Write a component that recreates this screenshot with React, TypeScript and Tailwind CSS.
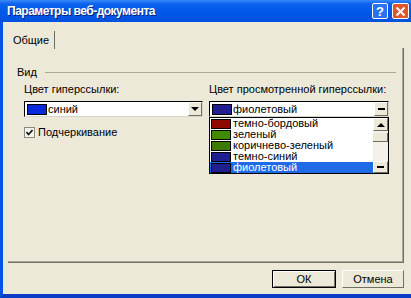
const listItems = [
  { name: 'темно-бордовый', color: '#8E0A00' },
  { name: 'зеленый', color: '#3F8A00' },
  { name: 'коричнево-зеленый', color: '#3C7A00' },
  { name: 'темно-синий', color: '#1F1F8F' },
  { name: 'фиолетовый', color: '#1F1F8F', selected: true },
];

function Arrow({ flat }: { flat?: boolean }) {
  return flat ? (
    <div className="w-[7px] h-[2px] bg-black" />
  ) : (
    <div className="w-0 h-0 border-l-[4px] border-r-[4px] border-t-[4px] border-l-transparent border-r-transparent border-t-black" />
  );
}

function Combo({ color, label, flat }: { color: string; label: string; flat?: boolean }) {
  return (
    <div className="h-[16px] flex items-center border-t border-l border-black border-r border-b border-r-[#D8D4C8] border-b-[#D8D4C8] bg-white">
      <div className="ml-[2px] w-[20px] h-[11px] border border-black" style={{ backgroundColor: color }} />
      <span className="ml-[1px] flex-1 leading-[14px]">{label}</span>
      <div className="w-[14px] h-[14px] bg-[#ECE9D8] border-t border-l border-white border-r border-b border-r-[#716F64] border-b-[#716F64] flex items-center justify-center">
        <Arrow flat={flat} />
      </div>
    </div>
  );
}

export default function App() {
  return (
    <div className="w-[411px] h-[298px] flex flex-col overflow-hidden text-[11px] text-black font-['Liberation_Sans',Arial,sans-serif] bg-[#0054E3]">
      {/* title bar */}
      <div className="h-[22px] flex items-center bg-[linear-gradient(to_bottom,#3A8BF6_0%,#0A62EE_18%,#0058E8_55%,#0052DE_100%)]">
        <span className="ml-[7px] flex-1 text-white font-bold text-[12px] tracking-[-0.5px] [text-shadow:1px_1px_0_#0A1F80]">
          Параметры веб-документа
        </span>
        <div className="w-[16px] h-[16px] rounded-[2px] border border-white bg-[#2A72F0] flex items-center justify-center text-white font-bold text-[13px] leading-none">
          ?
        </div>
        <div className="ml-[4px] mr-[2px] w-[17px] h-[16px] rounded-[2px] border border-white bg-[#E0562B] flex items-center justify-center">
          <svg width="11" height="11" viewBox="0 0 11 11">
            <path d="M1.5 1.5 L9.5 9.5 M9.5 1.5 L1.5 9.5" stroke="white" strokeWidth="2" />
          </svg>
        </div>
      </div>

      {/* body */}
      <div className="flex-1 flex flex-col bg-[#ECE9D8] border-l-[3px] border-l-[#0654E4] border-b-[4px] border-b-[#0A3CC8] pt-[9px]">
        <div className="ml-[5px] w-[47px] h-[18px] -mb-[1px] z-10 border-r border-r-[#716F64] flex items-center justify-center">
          Общие
        </div>
        <div className="relative ml-[5px] w-[396px] h-[215px] border-r border-b border-[#716F64] shadow-[inset_-1px_-1px_0_#ACA899]">
          <div className="flex items-center pl-[9px] pr-[7px] pt-[18px]">
            <span className="leading-[13px]">Вид</span>
            <div className="ml-[8px] flex-1 h-px bg-[#ACA899]" />
          </div>
          <div className="flex gap-[6px] pl-[16px] mt-[4px]">
            <div className="w-[179px] flex flex-col">
              <span className="leading-[13px]">Цвет гиперссылки:</span>
              <div className="mt-[5px]">
                <Combo color="#0A2BDB" label="синий" />
              </div>
              <div className="mt-[9px] flex items-center">
                <div className="w-[11px] h-[11px] bg-[#F4F3EE] border border-[#8C8A80] flex items-center justify-center">
                  <svg width="7" height="7" viewBox="0 0 7 7">
                    <path d="M0.5 3 L2.5 5.5 L6.5 1" stroke="#111" strokeWidth="1.6" fill="none" />
                  </svg>
                </div>
                <span className="ml-[3px] leading-[13px]">Подчеркивание</span>
              </div>
            </div>
            <div className="w-[180px] flex flex-col relative">
              <span className="leading-[13px]">Цвет просмотренной гиперссылки:</span>
              <div className="mt-[5px]">
                <Combo color="#1F1F8F" label="фиолетовый" flat />
              </div>
              {/* dropdown list */}
              <div className="absolute left-0 top-[34px] w-[180px] h-[57px] border border-black bg-white flex z-20">
                <div className="flex-1 flex flex-col">
                  {listItems.map((it) => (
                    <div
                      key={it.name}
                      className={`h-[11px] flex items-center ${it.selected ? 'bg-[#1F6AE6] text-white' : ''}`}
                    >
                      <div className="ml-[1px] w-[20px] h-[10px] border border-black" style={{ backgroundColor: it.color }} />
                      <span className="ml-[2px] leading-[11px]">{it.name}</span>
                    </div>
                  ))}
                </div>
                <div className="w-[15px] flex flex-col bg-[#F3F1EA]">
                  <div className="h-[13px] bg-[#ECE9D8] border-t border-l border-white border-r border-b border-r-[#716F64] border-b-[#716F64] flex items-center justify-center">
                    <div className="w-0 h-0 border-l-[4px] border-r-[4px] border-b-[4px] border-l-transparent border-r-transparent border-b-black" />
                  </div>
                  <div className="mt-[2px] h-[9px] bg-[#ECE9D8] border-r border-b border-r-[#716F64] border-b-[#716F64]" />
                  <div className="flex-1" />
                  <div className="h-[12px] bg-[#ECE9D8] border-t border-l border-white border-r border-b border-r-[#716F64] border-b-[#716F64] flex items-center justify-center">
                    <div className="w-[7px] h-[2px] bg-black" />
                  </div>
                </div>
              </div>
            </div>
          </div>
        </div>
        <div className="mt-[7px] flex justify-end gap-[6px] pr-[7px]">
          <button className="w-[64px] h-[18px] border border-black bg-[#ECE9D8] shadow-[inset_1px_1px_0_#fff,inset_-1px_-1px_0_#716F64] flex items-center justify-center">
            ОК
          </button>
          <button className="w-[62px] h-[18px] bg-[#ECE9D8] border-t border-l border-white border-r border-b border-r-[#716F64] border-b-[#716F64] flex items-center justify-center">
            Отмена
          </button>
        </div>
        <div className="flex-1" />
      </div>
    </div>
  );
}
